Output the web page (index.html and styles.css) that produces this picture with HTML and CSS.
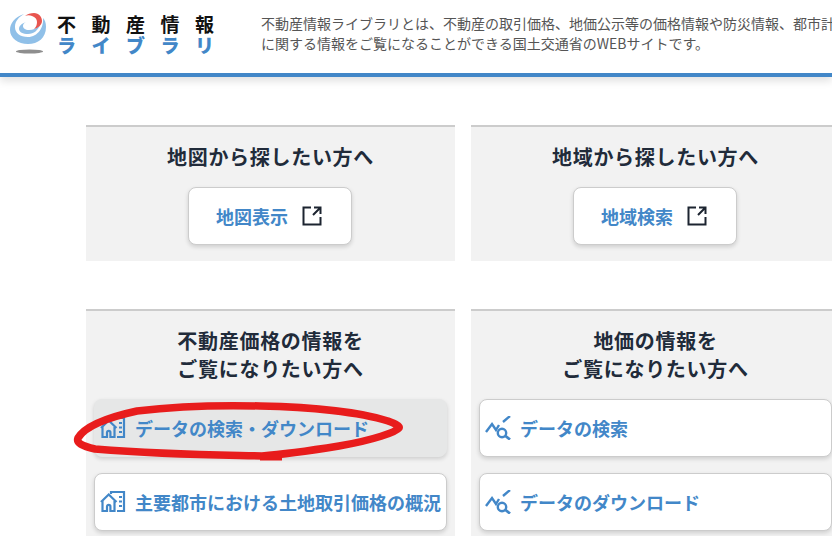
FILE: index.html
```html
<!DOCTYPE html>
<html lang="ja">
<head>
    <meta charset="UTF-8">
    <title>不動産情報ライブラリ</title>
    <link rel="stylesheet" href="styles.css">
</head>
<body>
    <header class="header">
        <div class="logo">
            <svg class="logo-mark" width="40" height="42" viewBox="0 0 40 42">
                <path d="M14 1C5 4 0 10 0 17c0 8 8 14 18 14s18-6 18-17c0-4-1-7-3-9 1 9-5 19-15 19C10 24 5 20 5 14 5 8 9 4 14 1z" fill="#90c0e8"/>
                <path d="M16 9c-5 2-7 4-7 7 0 3 4 5 9 5 6 0 10-4 12-9-3 3-7 5-11 5-4 0-6-2-6-4 0-2 1-3 3-4z" fill="#90c0e8"/>
                <path d="M15 3c2-2 6-3 9-3 5 0 8 4 8 8 0 4-4 7-8 8 2-2 3-4 3-7 0-3-2-5-5-6-2-1-5-1-7 0z" fill="#e8554f"/>
                <ellipse cx="19.500" cy="38.500" rx="13.500" ry="2" fill="#8e8e8e"/>
            </svg>
            <div class="logo-text">
                <div class="logo-top">不動産情報</div>
                <div class="logo-bottom">ライブラリ</div>
            </div>
        </div>
        <p class="lead">不動産情報ライブラリとは、不動産の取引価格、地価公示等の価格情報や防災情報、都市計<br>に関する情報をご覧になることができる国土交通省のWEBサイトです。</p>
    </header>

    <main class="main">
        <div class="grid">
            <section class="card">
                <h2>地図から探したい方へ</h2>
                <a class="btn btn-small" href="#">地図表示
                    <svg class="ext" width="20" height="20" viewBox="0 0 20 20"><path d="M9 1.500H1.500v17h17V11M11 9l7-7M12 1.500h6.500V8" fill="none" stroke="#1c2430" stroke-width="2"/></svg>
                </a>
            </section>
            <section class="card">
                <h2>地域から探したい方へ</h2>
                <a class="btn btn-small" href="#">地域検索
                    <svg class="ext" width="20" height="20" viewBox="0 0 20 20"><path d="M9 1.500H1.500v17h17V11M11 9l7-7M12 1.500h6.500V8" fill="none" stroke="#1c2430" stroke-width="2"/></svg>
                </a>
            </section>
            <section class="card">
                <h2>不動産価格の情報を<br>ご覧になりたい方へ</h2>
                <div class="links">
                    <a class="btn btn-wide btn-active" href="#">
                        <svg class="ico" width="26" height="24" viewBox="0 0 26 24"><path d="M1 12l7.700-7.500 7.800 7.500M2.500 11v10H7v-4.500a1.700 1.700 0 0 1 3.400 0V21h4.100V11M11 4V2h13v19h-7M19 7h3M19 11.500h3M19 16h3" fill="none" stroke="#4287c8" stroke-width="2.200"/></svg>
                        データの検索・ダウンロード
                    </a>
                    <a class="btn btn-wide" href="#">
                        <svg class="ico" width="26" height="24" viewBox="0 0 26 24"><path d="M1 12l7.700-7.500 7.800 7.500M2.500 11v10H7v-4.500a1.700 1.700 0 0 1 3.400 0V21h4.100V11M11 4V2h13v19h-7M19 7h3M19 11.500h3M19 16h3" fill="none" stroke="#4287c8" stroke-width="2.200"/></svg>
                        主要都市における土地取引価格の概況
                    </a>
                </div>
            </section>
            <section class="card">
                <h2>地価の情報を<br>ご覧になりたい方へ</h2>
                <div class="links">
                    <a class="btn btn-wide" href="#">
                        <svg class="ico" width="26" height="24" viewBox="0 0 26 24"><path d="M1 16l6-8 4 6 3-5M18 6l7-6" fill="none" stroke="#4287c8" stroke-width="2.400"/><circle cx="17" cy="17" r="4.200" fill="none" stroke="#4287c8" stroke-width="2.400"/><path d="M20.500 20l4.500 3.500" stroke="#4287c8" stroke-width="2.800"/></svg>
                        データの検索
                    </a>
                    <a class="btn btn-wide" href="#">
                        <svg class="ico" width="26" height="24" viewBox="0 0 26 24"><path d="M1 16l6-8 4 6 3-5M18 6l7-6" fill="none" stroke="#4287c8" stroke-width="2.400"/><circle cx="17" cy="17" r="4.200" fill="none" stroke="#4287c8" stroke-width="2.400"/><path d="M20.500 20l4.500 3.500" stroke="#4287c8" stroke-width="2.800"/></svg>
                        データのダウンロード
                    </a>
                </div>
            </section>
        </div>
    </main>

    <!-- hand-drawn red circle on top of the page -->
    <svg class="scribble" width="340" height="66" viewBox="0 0 340 66">
        <path d="M8 38C14 28 30 19 67 11 100 7 150 5 190 6c50 1 100 6 128 15 8 3 12 5 11 7-3 4-25 12-60 18-25 4-50 8-77 10-42-1-92-1-167-7C12 46 6 43 8 38z" fill="none" stroke="#e81c1c" stroke-width="7.500" stroke-linejoin="round"/>
        <path d="M190 58h22" fill="none" stroke="#e81c1c" stroke-width="5"/>
    </svg>
</body>
</html>
```

FILE: styles.css
```css
html, body { margin: 0; height: 536px; overflow: hidden; }
body { position: relative; font-family: "Noto Sans CJK JP", "Noto Sans", sans-serif; background-color: #fff; color: #1c2430; }
.header { display: flex; height: 73px; border-bottom: 4px solid #4287c8; box-shadow: 0 4px 8px rgba(0,0,0,0.12); }
.logo { display: flex; flex: none; width: 261px; padding: 13px 0 0 10px; box-sizing: border-box; }
.logo-mark { flex: none; }
.logo-text { margin-left: 7px; }
.logo-top { font-size: 19px; font-weight: 700; line-height: 22px; letter-spacing: 15.500px; color: #111; white-space: nowrap; }
.logo-bottom { font-size: 19px; font-weight: 900; line-height: 20px; letter-spacing: 15.500px; color: #4287c8; white-space: nowrap; }
.lead { margin: 0; padding-top: 13px; flex: none; font-size: 14px; line-height: 20px; color: #555; white-space: nowrap; }
.grid { display: grid; grid-template-columns: 369px 369px; column-gap: 16px; row-gap: 48px; padding: 48px 0 0 86px; }
.card { background-color: #f2f2f2; border-top: 2px solid #ccc; padding: 16px 8px 16px; text-align: center; }
.card h2 { margin: 0 0 16px; font-size: 20px; font-weight: 700; line-height: 28px; letter-spacing: 0.7px; color: #212b3a; }
.btn { display: flex; align-items: center; background: #fff; border: 1px solid #ccc; border-radius: 8px; box-shadow: 0 2px 4px rgba(0,0,0,0.15); box-sizing: border-box; color: #4287c8; font-size: 18px; font-weight: 700; text-decoration: none; white-space: nowrap; }
.btn-small { justify-content: center; width: 164px; height: 58px; margin-left: 94px; padding-right: 2px; }
.ext { margin-left: 14px; }
.links { display: flex; flex-direction: column; gap: 16px; margin-top: 1px; }
.btn-wide { height: 58px; padding-left: 5px; }
.btn-active { background: #e6e7e7; border-color: #e6e7e7; }
.ico { margin-right: 9px; flex: none; }
.scribble { position: absolute; left: 70px; top: 400px; }
```
